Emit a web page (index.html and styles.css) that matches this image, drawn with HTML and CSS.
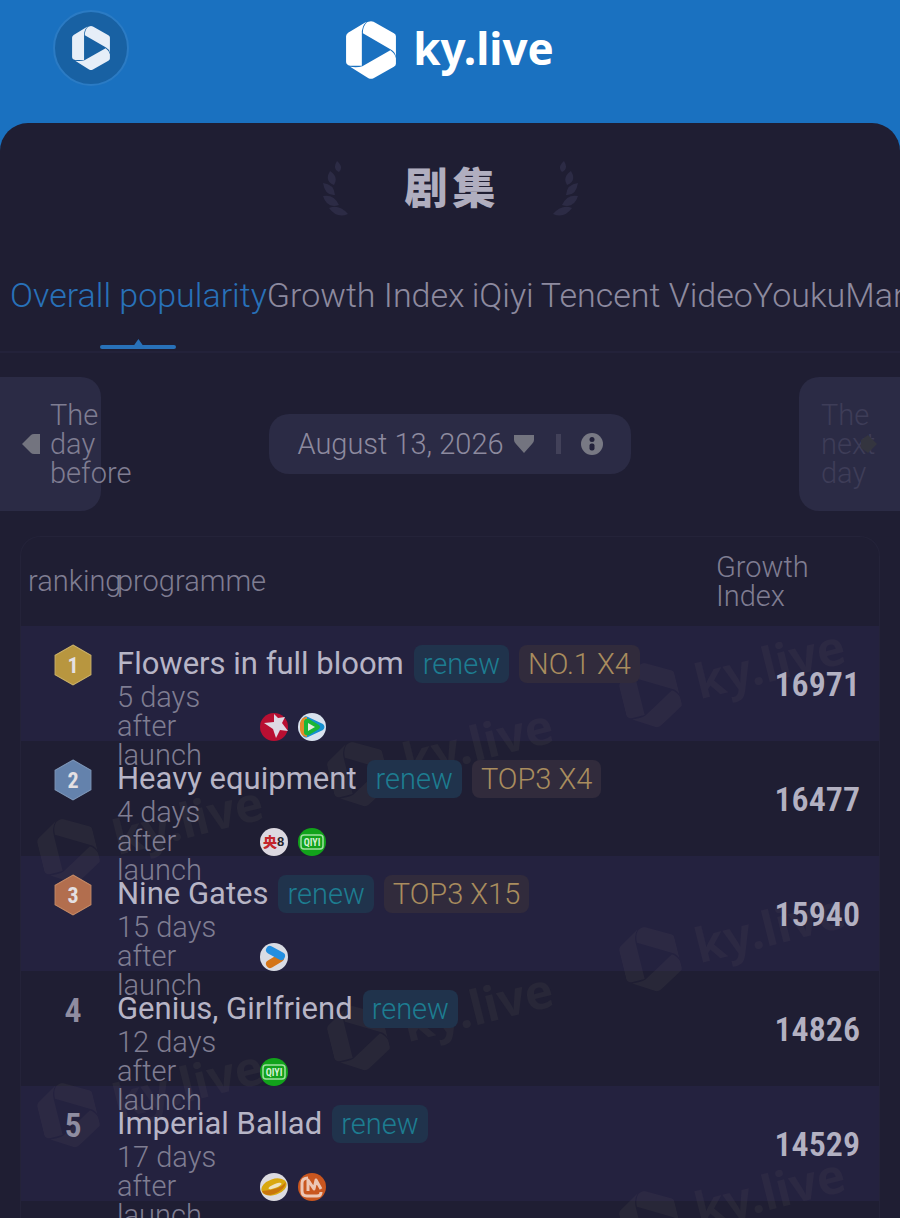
FILE: index.html
```html
<!DOCTYPE html>
<html lang="en">
<head>
    <meta charset="UTF-8">
    <meta name="viewport" content="width=device-width, initial-scale=1.0">
    <title>ky.live</title>
    <link rel="stylesheet" href="styles.css">
</head>
<body>
    <!-- Shared shapes -->
    <svg class="sprite" aria-hidden="true">
        <symbol id="mark" viewBox="0 0 49 57">
            <path d="M2 11.500L20 .8Q15 6 15.500 13V44H4Q0 43 0 40V15Q0 13 2 11.500Z"/>
            <path d="M22 .8Q24.500-.5 27 .8L47 12Q49 13 49 15V35Q48 30 44 28L16.500 12Q16.500 5 20.500 1.300Z"/>
            <path d="M43.500 28.800Q48 32 49 36.500V42Q49 44 47 45L27 56.200Q24.500 57.500 22 56.200L4 45Q11 46 16 44.500Z"/>
        </symbol>
        <symbol id="laurel" viewBox="0 0 28 56">
            <path d="M15 0Q22 6 17 11Q10 8 15 0ZM8 10Q17 16 12 24Q2 20 8 10ZM1 22Q12 23 13 34Q3 35 1 22ZM1 35Q12 33 17 44Q5 48 1 35ZM7 47Q17 43 26 53Q15 58 7 47Z"/>
        </symbol>
        <symbol id="hex" viewBox="0 0 37 41">
            <path d="M18.500 1L36 11V30L18.500 40L1 30V11Z"/>
        </symbol>
        <symbol id="iqiyi" viewBox="0 0 28 28">
            <circle cx="14" cy="14" r="14" fill="#12a21b"/>
            <rect x="3" y="7" width="22" height="14" rx="3" fill="none" stroke="#9fe0a0" stroke-width="1.500"/>
            <text x="14" y="18" text-anchor="middle" class="qiyi">QIYI</text>
        </symbol>
    </svg>

    <div class="app">
        <header class="header">
            <button class="avatar" aria-label="Account">
                <svg width="38" height="44"><use href="#mark"/></svg>
            </button>
            <a class="brand" href="#">
                <svg width="50" height="58"><use href="#mark"/></svg>
                <span>ky.live</span>
            </a>
        </header>

        <main class="panel">
            <div class="heading">
                <svg width="28" height="56"><use href="#laurel"/></svg>
                <h1 lang="zh"><span>剧</span><span>集</span></h1>
                <svg class="flip" width="28" height="56"><use href="#laurel"/></svg>
            </div>

            <nav class="tabs">
                <a class="active" href="#">Overall popularity</a>
                <a href="#">Growth Index</a>
                <a class="short" href="#">iQiyi</a>
                <a href="#">Tencent Video</a>
                <a href="#">Youku</a>
                <a href="#">Mango TV</a>
            </nav>

            <div class="dates">
                <button class="day prev">
                    <svg width="18" height="20"><path d="M0 10L9 1Q10 0 12 0H18V20H12Q10 20 9 19Z" fill="#73747f"/></svg>
                    <span>The day before</span>
                </button>
                <div class="date-box">
                    <button class="date">August 13, 2026
                        <svg width="20" height="18"><path d="M0 0H20V5Q20 7 18 9L10 18L2 9Q0 7 0 5Z" fill="#73747f"/></svg>
                    </button>
                    <i class="divider"></i>
                    <button class="info" aria-label="About the index">
                        <svg width="22" height="22"><circle cx="11" cy="11" r="11" fill="#787984"/><circle cx="11" cy="6.500" r="2.500" fill="#22213a"/><rect x="8.500" y="10.500" width="5" height="7" rx="2" fill="#22213a"/></svg>
                    </button>
                </div>
                <button class="day next" disabled>
                    <span>The next day</span>
                    <svg width="16" height="18"><path d="M0 5L7 0L16 9L7 18L0 13Z" fill="#34353f"/></svg>
                </button>
            </div>

            <section class="ranking">
                <svg class="watermarks" aria-hidden="true">
                    <g transform="translate(48 314) rotate(-14)"><use href="#mark" x="-29" y="-33" width="57" height="66"/><text x="46" y="16">ky.live</text></g>
                    <g transform="translate(338 237) rotate(-14)"><use href="#mark" x="-29" y="-33" width="57" height="66"/><text x="46" y="16">ky.live</text></g>
                    <g transform="translate(630 158) rotate(-14)"><use href="#mark" x="-29" y="-33" width="57" height="66"/><text x="46" y="16">ky.live</text></g>
                    <g transform="translate(48 578) rotate(-14)"><use href="#mark" x="-29" y="-33" width="57" height="66"/><text x="46" y="16">ky.live</text></g>
                    <g transform="translate(338 501) rotate(-14)"><use href="#mark" x="-29" y="-33" width="57" height="66"/><text x="46" y="16">ky.live</text></g>
                    <g transform="translate(630 422) rotate(-14)"><use href="#mark" x="-29" y="-33" width="57" height="66"/><text x="46" y="16">ky.live</text></g>
                    <g transform="translate(630 686) rotate(-14)"><use href="#mark" x="-29" y="-33" width="57" height="66"/><text x="46" y="16">ky.live</text></g>
                </svg>
                <table>
                    <thead>
                        <tr>
                            <th class="rank">ranking</th>
                            <th>programme</th>
                            <th class="score">Growth Index</th>
                        </tr>
                    </thead>
                    <tbody>
                        <tr>
                            <td class="rank"><span class="medal gold"><svg width="38" height="42"><use href="#hex"/></svg><b>1</b></span></td>
                            <td>
                                <div class="name">Flowers in full bloom <span class="tag">renew</span><span class="tag top">NO.1 X4</span></div>
                                <div class="meta">
                                    <span class="age">5 days after launch</span>
                                    <svg width="28" height="28"><circle cx="14" cy="14" r="14" fill="#b90f32"/><path d="M14 1L18 5L25 4L22 10L28 18L20 17L16 25L13 16L4 10L14 9Z" fill="#ded9e4"/></svg>
                                    <svg width="28" height="28"><circle cx="14" cy="14" r="14" fill="#d9e2ee"/><path d="M5 6Q6 2 10 4L25 11Q28 14 25 17L10 24Q5 26 4 20Z" fill="#168fd0"/><path d="M2 10Q4 3 9 4V24Q3 24 2 17Z" fill="#e38a2b"/><path d="M6 8Q7 5 11 6L21 12Q23 14 21 16L11 22Q6 23 6 19Z" fill="#1bb636"/><path d="M10 10L17 14L10 18Z" fill="#e2ecdf"/></svg>
                                </div>
                            </td>
                            <td class="score">16971</td>
                        </tr>
                        <tr>
                            <td class="rank"><span class="medal silver"><svg width="38" height="42"><use href="#hex"/></svg><b>2</b></span></td>
                            <td>
                                <div class="name">Heavy equipment <span class="tag">renew</span><span class="tag top">TOP3 X4</span></div>
                                <div class="meta">
                                    <span class="age">4 days after launch</span>
                                    <svg width="28" height="28"><circle cx="14" cy="14" r="14" fill="#dcd8e0"/><text x="3" y="19" class="cctv">央</text><text x="17" y="18" class="cctv-number">8</text></svg>
                                    <svg width="28" height="28"><use href="#iqiyi"/></svg>
                                </div>
                            </td>
                            <td class="score">16477</td>
                        </tr>
                        <tr>
                            <td class="rank"><span class="medal bronze"><svg width="38" height="42"><use href="#hex"/></svg><b>3</b></span></td>
                            <td>
                                <div class="name">Nine Gates <span class="tag">renew</span><span class="tag top">TOP3 X15</span></div>
                                <div class="meta">
                                    <span class="age">15 days after launch</span>
                                    <svg width="28" height="28"><circle cx="14" cy="14" r="14" fill="#d9dce4"/><path d="M10 21L20 15" stroke="#d47518" stroke-width="8" stroke-linecap="round"/><path d="M10 7L21 13" stroke="#238fe0" stroke-width="8" stroke-linecap="round"/></svg>
                                </div>
                            </td>
                            <td class="score">15940</td>
                        </tr>
                        <tr>
                            <td class="rank"><span class="place">4</span></td>
                            <td>
                                <div class="name">Genius, Girlfriend <span class="tag">renew</span></div>
                                <div class="meta">
                                    <span class="age">12 days after launch</span>
                                    <svg width="28" height="28"><use href="#iqiyi"/></svg>
                                </div>
                            </td>
                            <td class="score">14826</td>
                        </tr>
                        <tr>
                            <td class="rank"><span class="place">5</span></td>
                            <td>
                                <div class="name">Imperial Ballad <span class="tag">renew</span></div>
                                <div class="meta">
                                    <span class="age">17 days after launch</span>
                                    <svg width="28" height="28"><circle cx="14" cy="14" r="14" fill="#dcdbe0"/><ellipse cx="14" cy="14" rx="13" ry="8" transform="rotate(-18 14 14)" fill="#d9a80f"/><path d="M2 18Q5 24 14 21Q25 17 26 9Q20 17 2 18Z" fill="#c8750c"/><ellipse cx="15" cy="13" rx="7" ry="2" transform="rotate(-22 15 13)" fill="#eee3c0"/></svg>
                                    <svg width="28" height="28"><circle cx="14" cy="14" r="14" fill="#c9561f"/><path d="M10 5Q4 5 4 10V18Q4 23 9 23H19Q23 23 23 19" fill="none" stroke="#ecc6b5" stroke-width="3"/><path d="M10 18V7L16 16L18 7L23 16" fill="none" stroke="#ecc6b5" stroke-width="3" stroke-linejoin="round"/></svg>
                                </div>
                            </td>
                            <td class="score">14529</td>
                        </tr>
                    </tbody>
                </table>
            </section>
        </main>
    </div>
</body>
</html>
```
FILE: styles.css
```css
* {
    box-sizing: border-box;
}

body {
    margin: 0;
    background-color: #1a71c0;
    color: #7f7d92;
    font-family: Roboto, "Noto Sans CJK SC", sans-serif;
    font-size: 29px;
    font-weight: 300;
    line-height: 29px;
}

button {
    padding: 0;
    border: none;
    background: none;
    color: inherit;
    font: inherit;
    cursor: pointer;
}

a {
    color: inherit;
    text-decoration: none;
}

svg {
    display: block;
    flex: none;
}

.sprite {
    position: absolute;
    width: 0;
    height: 0;
}

.app {
    display: flex;
    flex-direction: column;
    height: 100vh;
    overflow: hidden;
}

/* Header */
.header {
    display: grid;
    grid-template-columns: 1fr auto 1fr;
    align-items: start;
    padding: 10px 53px 33px;
}

.avatar {
    display: flex;
    align-items: center;
    justify-content: center;
    width: 76px;
    height: 76px;
    border: 2px solid #2b7bc4;
    border-radius: 50%;
    background-color: #1861a3;
    fill: #e6eef8;
}

.brand {
    display: flex;
    align-items: center;
    gap: 17px;
    height: 80px;
    color: #fff;
    fill: #fff;
    font: bold 44px/60px "Noto Sans", sans-serif;
}

.brand span {
    padding-bottom: 4px;
}

/* Panel */
.panel {
    flex: 1;
    min-height: 0;
    border-radius: 28px 28px 0 0;
    background-color: #1f1e33;
}

.heading {
    display: flex;
    align-items: center;
    justify-content: center;
    gap: 55px;
    height: 132px;
    fill: #2c2b45;
}

.heading .flip {
    transform: scaleX(-1);
}

h1 {
    display: flex;
    gap: 5px;
    margin: 0;
    color: #b0aebf;
    font-size: 43px;
    font-weight: 900;
    line-height: 60px;
}

.tabs {
    display: flex;
    height: 98px;
    padding-left: 10px;
    border-bottom: 2px solid #23223a;
    overflow: hidden;
    color: #8d8a9f;
    font-size: 34px;
    line-height: 80px;
    white-space: nowrap;
}

.tabs a {
    flex: none;
}

.tabs .short {
    padding: 0 7px;
}

.tabs .active {
    position: relative;
    color: #2871b9;
}

.tabs .active::before,
.tabs .active::after {
    content: "";
    position: absolute;
    left: 50%;
    bottom: 2px;
    width: 76px;
    height: 4px;
    margin-left: -38px;
    border-radius: 2px;
    background-color: #2871b9;
}

.tabs .active::after {
    width: 14px;
    height: 10px;
    margin-left: -7px;
    clip-path: polygon(50% 0, 100% 100%, 0 100%);
}

/* Date switcher */
.dates {
    display: flex;
    align-items: center;
    justify-content: space-between;
    padding: 24px 0 25px;
}

.day {
    display: flex;
    align-items: center;
    width: 101px;
    height: 134px;
    background-color: #2b2b45;
    text-align: left;
}

.day span {
    width: 50px;
}

.prev {
    gap: 10px;
    padding-left: 22px;
    border-radius: 0 20px 20px 0;
}

.next {
    padding-left: 22px;
    border-radius: 20px 0 0 20px;
    color: #3e3d58;
}

.next svg {
    margin-left: -10px;
}

.date-box {
    display: flex;
    align-items: center;
    height: 60px;
    padding: 0 28px;
    border-radius: 20px;
    background-color: #2b2b45;
    color: #8d8a9f;
}

.date {
    display: flex;
    align-items: center;
    gap: 10px;
}

.divider {
    width: 5px;
    height: 20px;
    margin: 0 20px 0 22px;
    background-color: #424159;
}

/* Ranking table */
.ranking {
    position: relative;
    margin: 0 20px;
    padding-bottom: 20px;
    border: 1px solid #242339;
    border-bottom: none;
    border-radius: 20px 20px 0 0;
}

.watermarks {
    position: absolute;
    inset: 0;
    width: 100%;
    height: 100%;
    fill: #282738;
    font: bold 48px "Noto Sans", sans-serif;
}

table {
    position: relative;
    width: 100%;
    border-collapse: collapse;
    table-layout: fixed;
}

th {
    height: 89px;
    padding: 0;
    font-weight: 300;
    text-align: left;
}

th.rank {
    padding-left: 7px;
}

.rank {
    width: 96px;
}

.score {
    width: 163px;
}

th.score {
    padding-right: 60px;
}

td {
    height: 115px;
    padding: 0;
    vertical-align: top;
}

tbody tr:nth-child(odd) {
    background-color: rgba(60, 52, 115, 0.2);
}

td.rank {
    padding: 18px 0 0 33px;
}

td.score {
    padding-right: 19px;
    color: #b3b1c2;
    font: 600 34px "Roboto Condensed", Roboto, sans-serif;
    text-align: right;
    vertical-align: middle;
}

.medal {
    display: grid;
    width: 38px;
    place-items: center;
    color: #e4e0e3;
    stroke-width: 1;
}

.medal svg,
.medal b {
    grid-area: 1 / 1;
}

.medal b {
    font: bold 22px "Roboto Condensed", Roboto, sans-serif;
}

.gold {
    fill: #b8963f;
    stroke: #cbb168;
}

.silver {
    fill: #6482ac;
    stroke: #7d96b8;
}

.bronze {
    fill: #b26e4e;
    stroke: #c58a66;
}

.medal b {
    stroke: none;
}

.place {
    display: block;
    width: 38px;
    color: #8f8da1;
    font: 600 34px/42px "Roboto Condensed", Roboto, sans-serif;
    text-align: center;
}

.name {
    display: flex;
    align-items: center;
    gap: 10px;
    padding-top: 19px;
    color: #b7b5c6;
    font-size: 31px;
    font-weight: 400;
    line-height: 38px;
    white-space: nowrap;
}

.tag {
    padding: 0 9px;
    border-radius: 8px;
    background-color: #20334c;
    color: #1d7d91;
    font-size: 29px;
    font-weight: 300;
}

.top {
    background-color: #312b3c;
    color: #a98d5e;
}

/* The launch text is three lines and runs past its row */
.meta {
    display: flex;
    align-items: center;
    gap: 10px;
    height: 58px;
    padding-top: 29px;
}

.age {
    width: 133px;
}

.qiyi {
    fill: #d5f0d5;
    font: bold 10px "Roboto Condensed", Roboto, sans-serif;
}

.cctv {
    fill: #c4262c;
    font: 900 14px "Noto Sans CJK SC", sans-serif;
}

.cctv-number {
    fill: #26242c;
    font: bold 13px "Liberation Sans", sans-serif;
}
```
